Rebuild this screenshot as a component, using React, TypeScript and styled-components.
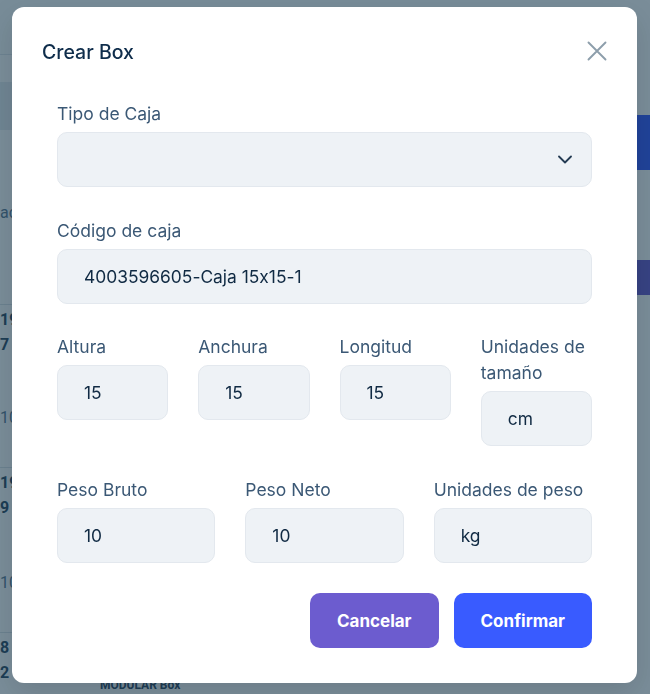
import React from "react";
import styled, { createGlobalStyle } from "styled-components";

const Global = createGlobalStyle`
  html, body { margin: 0; padding: 0; }
  body { font-family: Inter, "Noto Sans", sans-serif; background: #ffffff; overflow: hidden; font-feature-settings: "calt" 0; }
  * { box-sizing: border-box; }
`;

/* ---------- background page ---------- */
const Page = styled.div`
  display: grid;
  grid-template-columns: 1fr 30px;
  width: 650px;
  height: 694px;
  overflow: hidden;
  background: #ffffff;
`;
const Main = styled.div`
  display: flex;
  flex-direction: column;
`;
const TopBar = styled.div`
  height: 55px;
  border-bottom: 1px solid #e2e7ec;
  background: #fbfcfd;
`;
const SubBar = styled.div`
  height: 27px;
`;
const TableHead = styled.div`
  height: 48px;
  background: #e7ecf1;
`;
const Row = styled.div<{ $h: number }>`
  display: grid;
  grid-template-columns: 100px 1fr;
  height: ${(p) => p.$h}px;
  border-bottom: 1px solid #dde3e9;
`;
const Cell = styled.div<{ $pt?: number }>`
  display: flex;
  flex-direction: column;
  padding-top: ${(p) => p.$pt ?? 0}px;
`;
const Strong = styled.span`
  font-family: Roboto, "Liberation Sans", sans-serif;
  font-weight: 700;
  font-size: 16px;
  line-height: 25px;
  color: #334e68;
`;
const Tiny = styled.span`
  font-family: Roboto, "Liberation Sans", sans-serif;
  font-weight: 700;
  font-size: 12px;
  line-height: 12px;
  color: #334e68;
`;
const Soft = styled.span<{ $mt: number }>`
  margin-top: ${(p) => p.$mt}px;
  font-family: Roboto, "Liberation Sans", sans-serif;
  font-size: 16px;
  line-height: 25px;
  color: #627d98;
`;
const Side = styled.div`
  display: flex;
  flex-direction: column;
`;
const SideButton = styled.div<{ $mt: number; $h: number; $bg: string }>`
  margin-top: ${(p) => p.$mt}px;
  height: ${(p) => p.$h}px;
  background: ${(p) => p.$bg};
  border-radius: 6px 0 0 6px;
`;

/* ---------- modal ---------- */
const Overlay = styled.div`
  position: fixed;
  inset: 0;
  background: rgba(13, 48, 70, 0.55);
  display: flex;
  justify-content: flex-start;
  align-items: flex-start;
  padding: 7px 0 0 12px;
`;
const Modal = styled.div`
  width: 625px;
  background: #ffffff;
  border-radius: 12px;
  padding: 30px 45px 35px;
  box-shadow: 0 10px 30px rgba(0, 0, 0, 0.12);
  display: flex;
  flex-direction: column;
`;
const Header = styled.div`
  display: flex;
  align-items: center;
  justify-content: space-between;
  height: 28px;
  margin: 0 -15px 36px;
`;
const Title = styled.h2`
  margin: 0;
  margin-top: 2px;
  font-size: 19.5px;
  font-weight: 500;
  line-height: 28px;
  color: #0f2d4b;
`;
const CloseButton = styled.button`
  border: 0;
  background: none;
  padding: 0;
  width: 20px;
  height: 20px;
  display: flex;
  cursor: pointer;
`;
const Form = styled.div`
  display: flex;
  flex-direction: column;
  gap: 30.5px;
`;
const Grid = styled.div<{ $cols: number }>`
  display: grid;
  grid-template-columns: repeat(${(p) => p.$cols}, 1fr);
  column-gap: 30px;
  align-items: start;
`;
const Field = styled.label`
  display: flex;
  flex-direction: column;
  min-width: 0;
`;
const Label = styled.span`
  font-size: 17.5px;
  line-height: 26px;
  color: #3b5875;
  margin-bottom: 5px;
`;
const Input = styled.input`
  width: 100%;
  height: 55px;
  border: 1px solid #e3e8ee;
  background: #eef2f6;
  border-radius: 10px;
  padding: 0 26px;
  font-family: Inter, "Noto Sans", sans-serif;
  font-feature-settings: "calt" 0;
  font-size: 17.4px;
  color: #102a43;
  outline: none;
`;
const Select = styled.div`
  height: 55px;
  border: 1px solid #e3e8ee;
  background: #eef2f6;
  border-radius: 10px;
  padding: 0 19px 0 26px;
  display: flex;
  align-items: center;
  justify-content: flex-end;
`;
const Actions = styled.div`
  display: flex;
  justify-content: flex-end;
  gap: 15px;
`;
const Button = styled.button<{ $bg: string }>`
  height: 55px;
  padding: 0 27px;
  border: 0;
  border-radius: 10px;
  background: ${(p) => p.$bg};
  color: #ffffff;
  font-family: Inter, "Noto Sans", sans-serif;
  font-size: 17px;
  font-weight: 700;
  cursor: pointer;
`;

const TextField = ({ label, value }: { label: string; value: string }) => (
  <Field>
    <Label>{label}</Label>
    <Input defaultValue={value} readOnly />
  </Field>
);

export default function App() {
  return (
    <>
      <Global />
      <Page>
        <Main>
          <TopBar />
          <SubBar />
          <TableHead />
          <Row $h={175}>
            <Cell $pt={70}>
              <Soft $mt={0}>acción</Soft>
            </Cell>
            <Cell />
          </Row>
          <Row $h={163}>
            <Cell $pt={2}>
              <Strong>19</Strong>
              <Strong>7</Strong>
              <Soft $mt={48}>10</Soft>
            </Cell>
            <Cell />
          </Row>
          <Row $h={165}>
            <Cell $pt={2}>
              <Strong>19</Strong>
              <Strong>9</Strong>
              <Soft $mt={50}>10</Soft>
            </Cell>
            <Cell />
          </Row>
          <Row $h={120}>
            <Cell $pt={2}>
              <Strong>8</Strong>
              <Strong>2</Strong>
            </Cell>
            <Cell $pt={46}>
              <Tiny>MODULAR Box</Tiny>
            </Cell>
          </Row>
        </Main>
        <Side>
          <SideButton $mt={115} $h={55} $bg="#3a5cff" />
          <SideButton $mt={90} $h={35} $bg="#6c5ccf" />
        </Side>
      </Page>

      <Overlay>
        <Modal role="dialog" aria-label="Crear Box">
          <Header>
            <Title>Crear Box</Title>
            <CloseButton aria-label="Cerrar">
              <svg width="20" height="20" viewBox="0 0 20 20">
                <path d="M1.5 1.5L18.5 18.5M18.5 1.5L1.5 18.5" stroke="#8d9eab" strokeWidth="1.9" strokeLinecap="round" fill="none" />
              </svg>
            </CloseButton>
          </Header>
          <Form>
            <Field>
              <Label>Tipo de Caja</Label>
              <Select>
                <svg width="14" height="9" viewBox="0 0 14 9">
                  <path d="M1 1.5l6 6 6-6" stroke="#243b53" strokeWidth="1.8" fill="none" strokeLinecap="round" strokeLinejoin="round" />
                </svg>
              </Select>
            </Field>
            <TextField label="Código de caja" value="4003596605-Caja 15x15-1" />
            <Grid $cols={4}>
              <TextField label="Altura" value="15" />
              <TextField label="Anchura" value="15" />
              <TextField label="Longitud" value="15" />
              <TextField label="Unidades de tamaño" value="cm" />
            </Grid>
            <Grid $cols={3}>
              <TextField label="Peso Bruto" value="10" />
              <TextField label="Peso Neto" value="10" />
              <TextField label="Unidades de peso" value="kg" />
            </Grid>
            <Actions>
              <Button $bg="#6c5ccf">Cancelar</Button>
              <Button $bg="#395bff">Confirmar</Button>
            </Actions>
          </Form>
        </Modal>
      </Overlay>
    </>
  );
}
